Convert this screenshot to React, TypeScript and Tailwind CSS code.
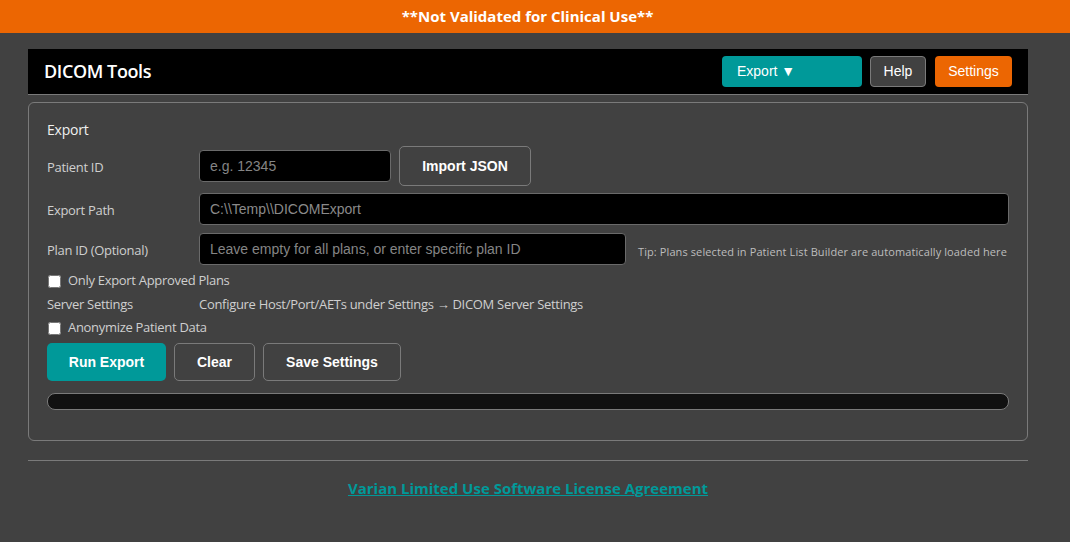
import React from "react";

export default function App() {
  const label = "w-[152px] shrink-0 mt-[3px] text-[13px] tracking-[-0.3px] text-[#cfcfcf] font-['Open_Sans',sans-serif]";
  return (
    <div className="min-h-[542px] bg-[#414141] font-['Open_Sans',sans-serif]">
      <div className="h-[33px] bg-[#ec6602] flex items-center justify-center pr-[15px]">
        <span className="text-white font-bold text-[15px]">**Not Validated for Clinical Use**</span>
      </div>
      <div className="w-[1000px] ml-[28px] pt-4">
        <div className="h-[46px] bg-black border-b border-[#7a7a7a] flex items-center justify-between pl-4 pr-4">
          <span className="text-white text-[18px] font-semibold tracking-[-0.4px]">DICOM Tools</span>
          <div className="flex items-center font-['Liberation_Sans',Arial,sans-serif] text-[14px] text-white">
            <button className="w-[140px] h-[31px] rounded-[4px] bg-[#009999] text-left pl-[15px]">Export ▼</button>
            <button className="ml-2 w-[56px] h-[31px] rounded-[4px] bg-[#414141] border border-[#7a7a7a]">Help</button>
            <button className="ml-[9px] w-[77px] h-[31px] rounded-[4px] bg-[#ec6602]">Settings</button>
          </div>
        </div>

        <div className="mt-[7px] border border-[#7a7a7a] rounded-[6px] px-[18px] pt-[17px] pb-[30px] flex flex-col">
          <div className="h-[20px] leading-[20px] text-[14px] text-[#f0f0f0] tracking-[-0.2px]">Export</div>

          <div className="mt-[6px] h-[40px] flex items-center">
            <span className={label}>Patient ID</span>
            <input
              className="w-[192px] h-[32px] bg-black border border-[#6a6a6a] rounded-[4px] px-[10px] text-[14px] text-[#aaa] placeholder:text-[#858585] font-['Liberation_Sans',Arial,sans-serif] outline-none"
              placeholder="e.g. 12345"
            />
            <button className="ml-2 w-[132px] h-[40px] rounded-[5px] border border-[#7a7a7a] bg-transparent text-white font-bold text-[14px] font-['Liberation_Sans',Arial,sans-serif]">
              Import JSON
            </button>
          </div>

          <div className="mt-[7px] h-[32px] flex items-center">
            <span className={label}>Export Path</span>
            <input
              className="flex-1 h-[32px] bg-black border border-[#6a6a6a] rounded-[4px] px-[10px] text-[14px] text-[#8a8a8a] font-['Liberation_Sans',Arial,sans-serif] outline-none"
              defaultValue="C:\\Temp\\DICOMExport"
            />
          </div>

          <div className="mt-[8px] h-[32px] flex items-center">
            <span className={label}>Plan ID (Optional)</span>
            <input
              className="w-[427px] h-[32px] bg-black border border-[#6a6a6a] rounded-[4px] px-[10px] text-[14px] text-[#aaa] placeholder:text-[#858585] font-['Liberation_Sans',Arial,sans-serif] outline-none"
              placeholder="Leave empty for all plans, or enter specific plan ID"
            />
            <span className="ml-[12px] mt-[6px] text-[11px] tracking-[0.1px] text-[#bdbdbd] whitespace-nowrap">
              Tip: Plans selected in Patient List Builder are automatically loaded here
            </span>
          </div>

          <label className="mt-[6px] h-[20px] flex items-center">
            <input type="checkbox" className="m-0 ml-[1px] w-[13px] h-[13px]" />
            <span className="ml-[7px] text-[13px] tracking-[-0.3px] text-[#cfcfcf]">Only Export Approved Plans</span>
          </label>

          <div className="mt-[4px] h-[20px] flex items-center">
            <span className="w-[152px] shrink-0 text-[13px] tracking-[-0.3px] text-[#cfcfcf]">Server Settings</span>
            <span className="text-[13px] tracking-[-0.3px] text-[#cfcfcf]">
              Configure Host/Port/AETs under Settings → DICOM Server Settings
            </span>
          </div>

          <label className="mt-[3px] h-[20px] flex items-center">
            <input type="checkbox" className="m-0 ml-[1px] w-[13px] h-[13px]" />
            <span className="ml-[7px] text-[13px] tracking-[-0.3px] text-[#cfcfcf]">Anonymize Patient Data</span>
          </label>

          <div className="mt-[5px] h-[38px] flex items-center gap-2 font-['Liberation_Sans',Arial,sans-serif] text-[14px] font-bold text-white">
            <button className="w-[119px] h-[38px] rounded-[5px] bg-[#009999]">Run Export</button>
            <button className="w-[81px] h-[38px] rounded-[5px] border border-[#7a7a7a]">Clear</button>
            <button className="w-[138px] h-[38px] rounded-[5px] border border-[#7a7a7a]">Save Settings</button>
          </div>

          <div className="mt-[12px] h-[17px] rounded-[8px] bg-[#111111] border border-[#7a7a7a]" />
        </div>

        <div className="mt-[19px] border-t border-[#7a7a7a]" />
        <div className="mt-[17px] h-[20px] flex justify-center">
          <a href="#" className="text-[15px] leading-[20px] font-bold text-[#009999] underline">
            Varian Limited Use Software License Agreement
          </a>
        </div>
      </div>
    </div>
  );
}
